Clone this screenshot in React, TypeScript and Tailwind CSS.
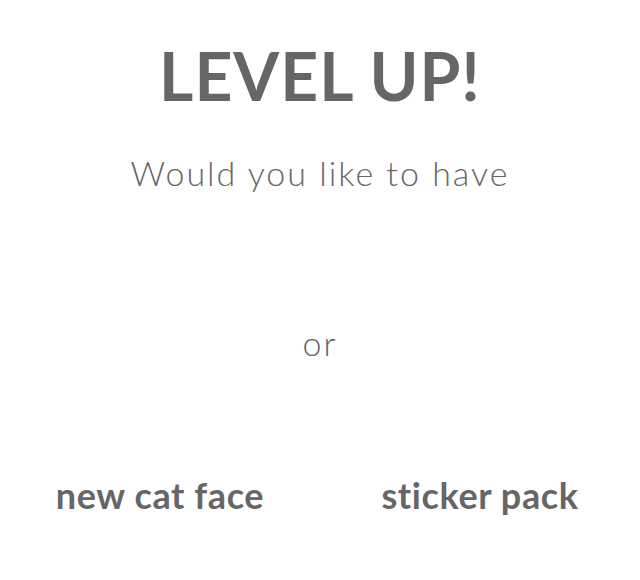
export default function App() {
  return (
    <div className="flex h-[580px] w-[640px] flex-col items-center bg-white text-[#666666] [font-family:Lato,'Open_Sans',sans-serif]">
      <h1 className="mt-[36px] text-[66px] font-bold leading-[80px] tracking-[1px]">LEVEL UP!</h1>
      <p className="mt-[37px] text-[34px] font-light leading-[40px] tracking-[2px]">Would you like to have</p>
      <p className="mt-[130px] text-[34px] font-light leading-[40px] tracking-[2px]">or</p>
      <div className="mt-[110px] grid w-full grid-cols-2">
        <span className="text-center text-[36px] font-bold leading-[44px] tracking-[0.6px]">new cat face</span>
        <span className="text-center text-[36px] font-bold leading-[44px] tracking-[0.6px]">sticker pack</span>
      </div>
    </div>
  );
}
